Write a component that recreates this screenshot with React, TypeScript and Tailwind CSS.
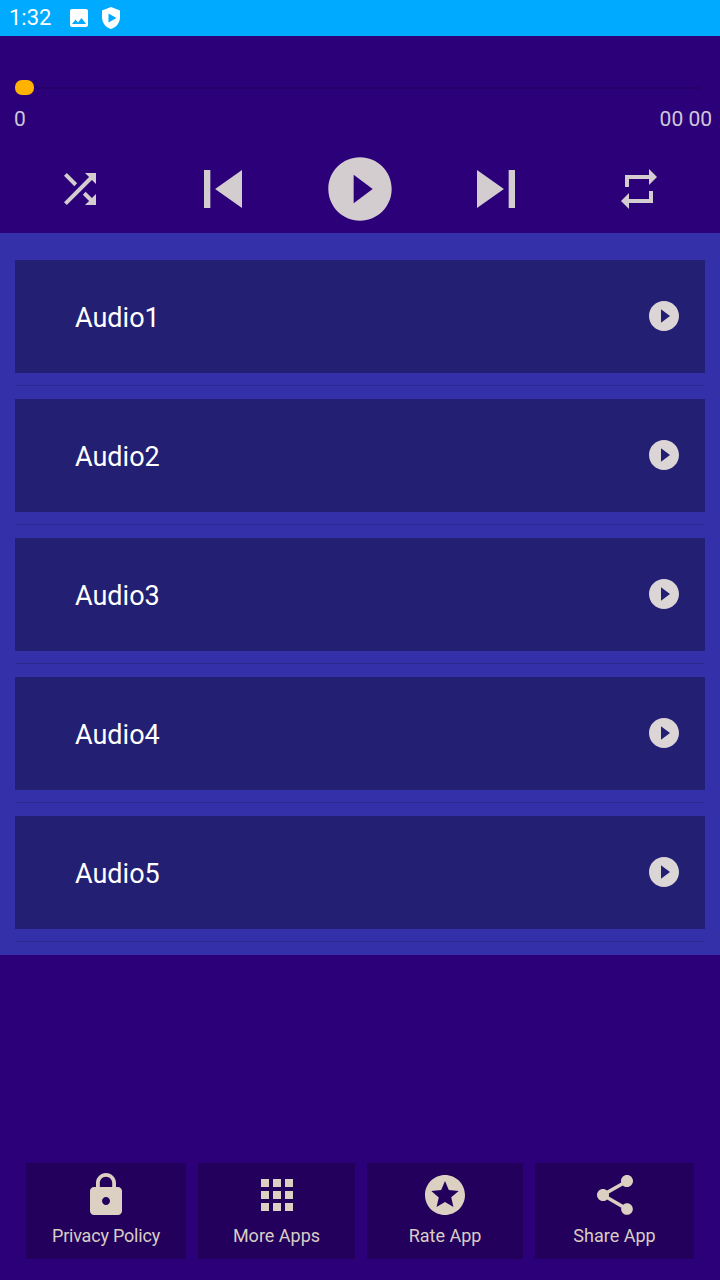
const paths = {
  shuffle: "M10.59 9.17L5.41 4 4 5.41l5.17 5.17 1.42-1.41zM14.5 4l2.04 2.04L4 18.59 5.41 20 17.96 7.46 20 9.5V4h-5.5zm.33 9.41l-1.41 1.41 3.13 3.13L14.5 20H20v-5.5l-2.04 2.04-3.13-3.13z",
  prev: "M6 6h2v12H6zm3.5 6l8.5 6V6z",
  play: "M12 2C6.48 2 2 6.48 2 12s4.48 10 10 10 10-4.48 10-10S17.52 2 12 2zm-2 14.5v-9l6 4.5-6 4.5z",
  next: "M6 18l8.5-6L6 6v12zM16 6v12h2V6h-2z",
  repeat: "M7 7h10v3l4-4-4-4v3H5v6h2V7zm10 10H7v-3l-4 4 4 4v-3h12v-6h-2v4z",
  lock: "M18 8h-1V6c0-2.76-2.24-5-5-5S7 3.24 7 6v2H6c-1.1 0-2 .9-2 2v10c0 1.1.9 2 2 2h12c1.1 0 2-.9 2-2V10c0-1.1-.9-2-2-2zm-6 9c-1.1 0-2-.9-2-2s.9-2 2-2 2 .9 2 2-.9 2-2 2zm3.1-9H8.9V6c0-1.71 1.39-3.1 3.1-3.1 1.71 0 3.1 1.39 3.1 3.1v2z",
  apps: "M4 8h4V4H4v4zm6 12h4v-4h-4v4zm-6 0h4v-4H4v4zm0-6h4v-4H4v4zm6 0h4v-4h-4v4zm6-10v4h4V4h-4zm-6 4h4V4h-4v4zm6 6h4v-4h-4v4zm0 6h4v-4h-4v4z",
  star: "M11.99 2C6.47 2 2 6.48 2 12s4.47 10 9.99 10C17.52 22 22 17.52 22 12S17.52 2 11.99 2zm4.24 16L12 15.45 7.77 18l1.12-4.81-3.73-3.23 4.92-.42L12 5l1.92 4.53 4.92.42-3.73 3.23L16.23 18z",
  share: "M18 16.08c-.76 0-1.44.3-1.96.77L8.91 12.7c.05-.23.09-.46.09-.7s-.04-.47-.09-.7l7.05-4.11c.54.5 1.25.81 2.04.81 1.66 0 3-1.34 3-3s-1.34-3-3-3-3 1.34-3 3c0 .24.04.47.09.7L8.04 9.81C7.5 9.31 6.79 9 6 9c-1.66 0-3 1.34-3 3s1.34 3 3 3c.79 0 1.5-.31 2.04-.81l7.12 4.16c-.05.21-.08.43-.08.65 0 1.61 1.31 2.92 2.92 2.92 1.61 0 2.92-1.31 2.92-2.92s-1.31-2.92-2.92-2.92z",
  image: "M21 19V5c0-1.1-.9-2-2-2H5c-1.1 0-2 .9-2 2v14c0 1.1.9 2 2 2h14c1.1 0 2-.9 2-2zM8.5 13.5l2.5 3.01L14.5 12l4.5 6H5l3.5-4.5z",
}

const Icon = ({ d, className }: { d: string; className: string }) => (
  <svg viewBox="0 0 24 24" className={className} fill="currentColor" fillRule="evenodd">
    <path d={d} />
  </svg>
)

const tracks = ["Audio1", "Audio2", "Audio3", "Audio4", "Audio5"]

const footer = [
  { label: "Privacy Policy", icon: paths.lock, width: "w-[160px]", text: "tracking-[-0.2px]" },
  { label: "More Apps", icon: paths.apps, width: "w-[157px]", text: "" },
  { label: "Rate App", icon: paths.star, width: "w-[156px]", text: "" },
  { label: "Share App", icon: paths.share, width: "w-[159px]", text: "" },
]

const App = () => {
  return (
    <div className="w-[720px] h-[1280px] flex flex-col overflow-hidden bg-[#2c0078] font-['Roboto',sans-serif]">
      {/* Status bar */}
      <div className="h-9 shrink-0 bg-[#00aaff] flex items-center pl-[9px] text-white">
        <span className="text-[22px] leading-none w-[57px]">1:32</span>
        <Icon d={paths.image} className="w-6 h-6 ml-[1px]" />
        <svg viewBox="0 0 24 24" className="w-6 h-6 ml-[8px]" fill="currentColor" fillRule="evenodd">
          <path d="M12 1L3 4.600v6.600c0 5.600 3.800 10.300 9 11.800 5.200-1.500 9-6.200 9-11.800V4.600L12 1zM9.500 7.500l8 4.500-8 4.500v-9z" />
        </svg>
      </div>

      {/* Player */}
      <div className="h-[197px] shrink-0 flex flex-col text-[#d3cdd0]">
        <div className="relative mx-[15px] mt-[44px] h-[15px] flex items-center">
          <div className="w-[675px] ml-[10px] h-[2px] bg-[#25006a]" />
          <div className="absolute left-0 top-0 w-[19px] h-[15px] rounded-[7px] bg-[#ffb300]" />
        </div>
        <div className="flex justify-between pl-[14px] pr-[8px] mt-[12px] text-[21px] leading-[24px] text-[#cfc8d8]">
          <span>0</span>
          <span>00 00</span>
        </div>
        <div className="h-[76px] mt-[20px] flex items-center pl-[56px]">
          <Icon d={paths.shuffle} className="w-12 h-12" />
          <Icon d={paths.prev} className="w-[76px] h-[76px] ml-[81px]" />
          <Icon d={paths.play} className="w-[76px] h-[76px] ml-[61px]" />
          <Icon d={paths.next} className="w-[76px] h-[76px] ml-[60px]" />
          <Icon d={paths.repeat} className="w-12 h-12 ml-[81px]" />
        </div>
      </div>

      {/* Track list */}
      <div className="shrink-0 bg-[#3330aa] px-[15px] pt-[27px] flex flex-col">
        {tracks.map((t) => (
          <div key={t} className="h-[139px] flex flex-col">
            <div className="h-[113px] bg-[#232073] flex items-center pl-[60px] pr-[23px] justify-between">
              <span className="text-[27px] leading-none text-white pt-[4px]">{t}</span>
              <Icon d={paths.play} className="w-9 h-9 mb-[1px] text-[#dcd5d5]" />
            </div>
            <div className="mt-[12px] h-[1px] bg-[#2c2990]" />
          </div>
        ))}
      </div>

      {/* Footer buttons */}
      <div className="flex-1 flex items-end pl-[26px] pb-[21px] gap-[12px]">
        {footer.map((f) => (
          <div key={f.label} className={`${f.width} h-[96px] bg-[#22005c] flex flex-col items-center pt-[8px] text-[#dcd0c2]`}>
            <Icon d={f.icon} className="w-12 h-12 shrink-0" />
            <span className={`text-[18px] leading-[22px] mt-[6px] text-[#d8cdc5] ${f.text}`}>{f.label}</span>
          </div>
        ))}
      </div>
    </div>
  )
}

export default App
